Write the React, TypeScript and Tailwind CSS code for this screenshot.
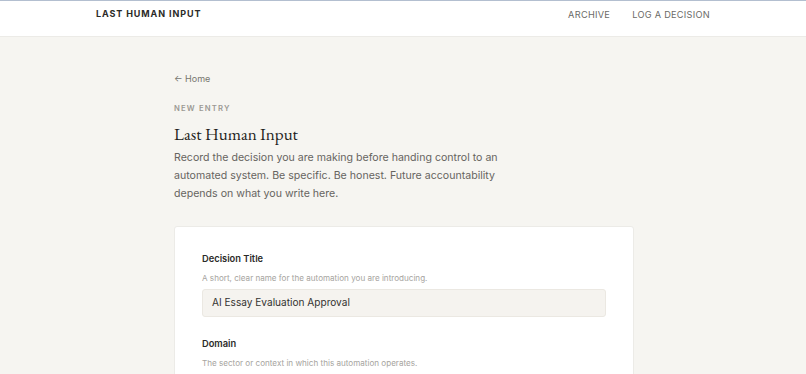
import React from 'react';

const Field: React.FC<{ label: string; hint: string; value: string }> = ({ label, hint, value }) => (
  <div className="mb-[20px]">
    <div className="text-[9.3px] font-semibold text-[#2b2a28] leading-[14px]">{label}</div>
    <div className="mt-[6px] text-[8.1px] text-[#a6a4a0] leading-[12px]">{hint}</div>
    <div className="mt-[5px] h-[28px] rounded-[3px] border border-[#ebe8e2] bg-[#f5f3ef] px-[9px] flex items-center text-[10.1px] text-[#333230]">
      {value}
    </div>
  </div>
);

export default function App() {
  return (
    <div className="min-h-screen bg-[#f6f5f1] font-['Inter','Noto_Sans',sans-serif]">
      <header className="bg-white border-t border-[#b3bfd0] border-b border-b-[#ecebe7] h-[37px]">
        <div className="mx-auto w-[614px] flex items-start justify-between pt-[6px]">
          <a className="text-[9px] font-bold tracking-[0.1em] text-[#2b2a28]">LAST HUMAN INPUT</a>
          <nav className="flex gap-[22px] pt-[1px] text-[9.2px] tracking-[0.03em] text-[#6b6a67]">
            <a>ARCHIVE</a>
            <a>LOG A DECISION</a>
          </nav>
        </div>
      </header>

      <main className="mx-auto w-[462px] pl-[2px] pt-[36px]">
        <a className="block text-[9px] text-[#77756f] leading-[12px]">← Home</a>
        <div className="mt-[18px] text-[7.7px] font-semibold tracking-[0.15em] text-[#9b9994] leading-[12px]">
          NEW ENTRY
        </div>
        <h1 className="mt-[6px] text-[17px] leading-[26px] text-[#232220] font-['EB_Garamond','Liberation_Serif',serif]">
          Last Human Input
        </h1>
        <p className="mt-[2px] w-[332px] text-[10.6px] leading-[18px] text-[#66645f]">
          Record the decision you are making before handing control to an automated system. Be specific. Be honest.
          Future accountability depends on what you write here.
        </p>

        <div className="mt-[23px] rounded-[3px] border border-[#ecebe7] bg-white px-[27px] pt-[25px] pb-[20px]">
          <Field
            label="Decision Title"
            hint="A short, clear name for the automation you are introducing."
            value="AI Essay Evaluation Approval"
          />
          <Field label="Domain" hint="The sector or context in which this automation operates." value="" />
        </div>
      </main>
    </div>
  );
}
